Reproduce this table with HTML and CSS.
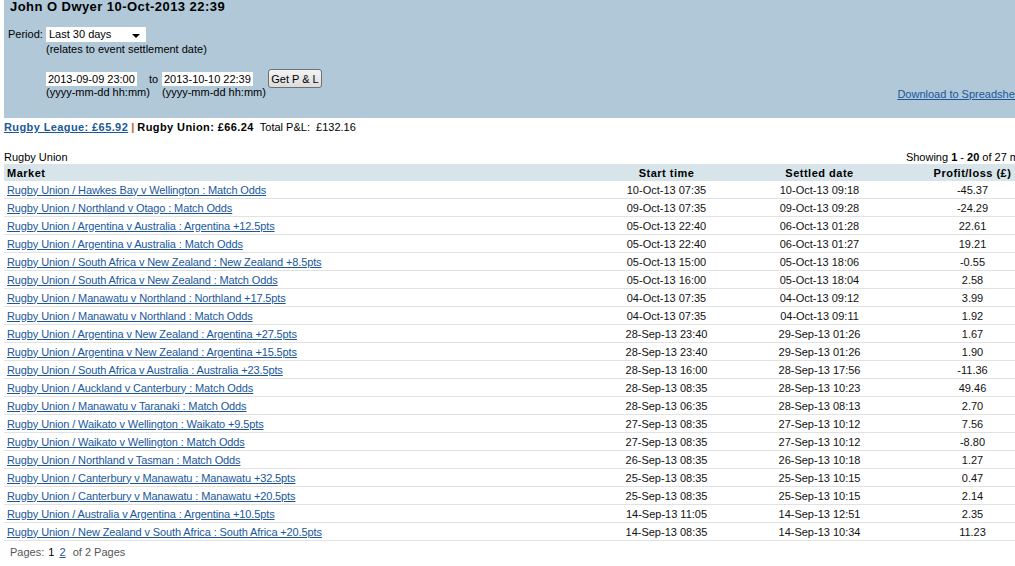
FILE: index.html
```html
<!DOCTYPE html>
<html>
<head>
<meta charset="utf-8">
<title>P&amp;L</title>
<link rel="stylesheet" href="styles.css">
</head>
<body>
<div class="panel">
  <h1 class="title">John O Dwyer 10-Oct-2013 22:39</h1>
  <div class="period-row">
    <span class="lbl">Period:</span>
    <div class="period-ctl">
      <div class="select"><span>Last 30 days</span><span class="arrow"></span></div>
      <div class="note">(relates to event settlement date)</div>
    </div>
  </div>
  <div class="dates">
    <div class="date-col">
      <div class="input">2013-09-09 23:00</div>
      <div class="fmt">(yyyy-mm-dd hh:mm)</div>
    </div>
    <span class="to">to</span>
    <div class="date-col">
      <div class="input">2013-10-10 22:39</div>
      <div class="fmt">(yyyy-mm-dd hh:mm)</div>
    </div>
    <button class="btn" type="button">Get P &amp; L</button>
    <a class="download" href="#">Download to Spreadsheet</a>
  </div>
</div>

<div class="summary">
  <a class="sum-link" href="#">Rugby League: £65.92</a>
  <span class="sep">|</span>
  <b class="sum-bold">Rugby Union: £66.24</b>
  <span class="total">Total P&amp;L:&nbsp; £132.16</span>
</div>

<div class="caption-row">
  <span>Rugby Union</span>
  <span>Showing <b>1</b> - <b>20</b> of 27 markets</span>
</div>

<table class="grid">
  <thead>
    <tr><th class="c-market">Market</th><th>Start time</th><th>Settled date</th><th>Profit/loss (£)</th></tr>
  </thead>
  <tbody>
    <tr><td class="c-market"><a href="#">Rugby Union / Hawkes Bay v Wellington : Match Odds</a></td><td>10-Oct-13 07:35</td><td>10-Oct-13 09:18</td><td>-45.37</td></tr>
    <tr><td class="c-market"><a href="#">Rugby Union / Northland v Otago : Match Odds</a></td><td>09-Oct-13 07:35</td><td>09-Oct-13 09:28</td><td>-24.29</td></tr>
    <tr><td class="c-market"><a href="#">Rugby Union / Argentina v Australia : Argentina +12.5pts</a></td><td>05-Oct-13 22:40</td><td>06-Oct-13 01:28</td><td>22.61</td></tr>
    <tr><td class="c-market"><a href="#">Rugby Union / Argentina v Australia : Match Odds</a></td><td>05-Oct-13 22:40</td><td>06-Oct-13 01:27</td><td>19.21</td></tr>
    <tr><td class="c-market"><a href="#">Rugby Union / South Africa v New Zealand : New Zealand +8.5pts</a></td><td>05-Oct-13 15:00</td><td>05-Oct-13 18:06</td><td>-0.55</td></tr>
    <tr><td class="c-market"><a href="#">Rugby Union / South Africa v New Zealand : Match Odds</a></td><td>05-Oct-13 16:00</td><td>05-Oct-13 18:04</td><td>2.58</td></tr>
    <tr><td class="c-market"><a href="#">Rugby Union / Manawatu v Northland : Northland +17.5pts</a></td><td>04-Oct-13 07:35</td><td>04-Oct-13 09:12</td><td>3.99</td></tr>
    <tr><td class="c-market"><a href="#">Rugby Union / Manawatu v Northland : Match Odds</a></td><td>04-Oct-13 07:35</td><td>04-Oct-13 09:11</td><td>1.92</td></tr>
    <tr><td class="c-market"><a href="#">Rugby Union / Argentina v New Zealand : Argentina +27.5pts</a></td><td>28-Sep-13 23:40</td><td>29-Sep-13 01:26</td><td>1.67</td></tr>
    <tr><td class="c-market"><a href="#">Rugby Union / Argentina v New Zealand : Argentina +15.5pts</a></td><td>28-Sep-13 23:40</td><td>29-Sep-13 01:26</td><td>1.90</td></tr>
    <tr><td class="c-market"><a href="#">Rugby Union / South Africa v Australia : Australia +23.5pts</a></td><td>28-Sep-13 16:00</td><td>28-Sep-13 17:56</td><td>-11.36</td></tr>
    <tr><td class="c-market"><a href="#">Rugby Union / Auckland v Canterbury : Match Odds</a></td><td>28-Sep-13 08:35</td><td>28-Sep-13 10:23</td><td>49.46</td></tr>
    <tr><td class="c-market"><a href="#">Rugby Union / Manawatu v Taranaki : Match Odds</a></td><td>28-Sep-13 06:35</td><td>28-Sep-13 08:13</td><td>2.70</td></tr>
    <tr><td class="c-market"><a href="#">Rugby Union / Waikato v Wellington : Waikato +9.5pts</a></td><td>27-Sep-13 08:35</td><td>27-Sep-13 10:12</td><td>7.56</td></tr>
    <tr><td class="c-market"><a href="#">Rugby Union / Waikato v Wellington : Match Odds</a></td><td>27-Sep-13 08:35</td><td>27-Sep-13 10:12</td><td>-8.80</td></tr>
    <tr><td class="c-market"><a href="#">Rugby Union / Northland v Tasman : Match Odds</a></td><td>26-Sep-13 08:35</td><td>26-Sep-13 10:18</td><td>1.27</td></tr>
    <tr><td class="c-market"><a href="#">Rugby Union / Canterbury v Manawatu : Manawatu +32.5pts</a></td><td>25-Sep-13 08:35</td><td>25-Sep-13 10:15</td><td>0.47</td></tr>
    <tr><td class="c-market"><a href="#">Rugby Union / Canterbury v Manawatu : Manawatu +20.5pts</a></td><td>25-Sep-13 08:35</td><td>25-Sep-13 10:15</td><td>2.14</td></tr>
    <tr><td class="c-market"><a href="#">Rugby Union / Australia v Argentina : Argentina +10.5pts</a></td><td>14-Sep-13 11:05</td><td>14-Sep-13 12:51</td><td>2.35</td></tr>
    <tr><td class="c-market"><a href="#">Rugby Union / New Zealand v South Africa : South Africa +20.5pts</a></td><td>14-Sep-13 08:35</td><td>14-Sep-13 10:34</td><td>11.23</td></tr>
  </tbody>
</table>

<div class="pager">
  <span>Pages:</span>
  <span class="cur">1</span>
  <a href="#">2</a>
  <span class="of">of 2 Pages</span>
</div>
</body>
</html>
```

FILE: styles.css
```css
html {
  overflow: hidden;
}

body {
  margin: 0;
  font-family: "Liberation Sans", Arial, sans-serif;
  font-size: 11px;
  line-height: 14px;
  color: #000;
  background: #fff;
  width: 1060px;
}

a {
  color: #1a579c;
  text-decoration: underline;
}

.panel {
  margin-left: 4px;
  width: 1020px;
  height: 118px;
  background: #b1c8d8;
  box-sizing: border-box;
  padding-left: 4px;
}

.title {
  margin: 0;
  padding-left: 2px;
  font-size: 13px;
  line-height: 14px;
  font-weight: bold;
  letter-spacing: 0.45px;
  color: #000;
}

.period-row {
  display: flex;
  align-items: flex-start;
  margin-top: 13px;
}

.lbl {
  width: 38px;
  line-height: 15px;
}

.select {
  width: 100px;
  height: 15px;
  background: #fff;
  display: flex;
  align-items: center;
  justify-content: space-between;
  box-sizing: border-box;
  padding: 0 6px 0 3px;
  line-height: 15px;
  color: #000;
}

.arrow {
  width: 0;
  height: 0;
  border-left: 4px solid transparent;
  border-right: 4px solid transparent;
  border-top: 4px solid #000;
  margin-top: 2px;
}

.note {
  line-height: 13px;
  margin-top: 1px;
}

.dates {
  display: flex;
  align-items: flex-start;
  margin-top: 16px;
  margin-left: 38px;
}

.date-col {
  width: 100px;
  white-space: nowrap;
}

.input {
  width: 91px;
  height: 14px;
  line-height: 14px;
  background: #fff;
  box-sizing: border-box;
  padding-left: 2px;
}

.fmt {
  line-height: 13px;
}

.to {
  margin: 0 3px;
  width: 10px;
  line-height: 14px;
}

.btn {
  margin: -3px 0 0 6px;
  width: 54px;
  height: 19px;
  padding: 0;
  font-family: inherit;
  font-size: 11px;
  color: #000;
  background: linear-gradient(#f4f4f4, #dcdcdc);
  border: 1px solid #707070;
  border-radius: 3px;
}

.download {
  margin-left: auto;
  margin-top: 15px;
  white-space: nowrap;
}

.summary {
  margin: 2px 0 0 4px;
  line-height: 14px;
}

.sum-link,
.sum-bold {
  font-weight: bold;
  letter-spacing: 0.4px;
}

.sep {
  color: #b8661e;
  font-weight: bold;
}

.total {
  margin-left: 3px;
}

.caption-row {
  display: flex;
  justify-content: space-between;
  width: 1045px;
  margin: 16px 0 0 4px;
  line-height: 14px;
}

.grid {
  margin-left: 4px;
  width: 1045px;
  border-collapse: collapse;
  table-layout: fixed;
}

.grid th,
.grid td {
  padding: 0;
  text-align: center;
  width: 153px;
  white-space: nowrap;
}

.grid th {
  height: 17px;
  background: #d7e5ea;
  font-weight: bold;
  letter-spacing: 0.5px;
}

.grid td {
  height: 17px;
  border-bottom: 1px solid #e2e2e2;
  color: #111;
}

.grid .c-market {
  width: 583px;
  text-align: left;
  padding-left: 3px;
}

.grid td.c-market a {
  letter-spacing: -0.12px;
}

.pager {
  margin: 4px 0 0 10px;
  line-height: 14px;
  color: #555;
}

.pager .cur {
  color: #000;
  margin-left: 1px;
}

.pager a {
  margin-left: 2px;
}

.pager .of {
  margin-left: 4px;
}
```
